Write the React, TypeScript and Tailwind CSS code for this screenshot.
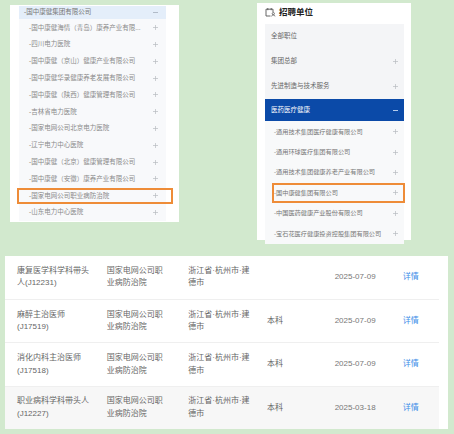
import React from "react";

const font = { fontFamily: '"Liberation Sans", "Noto Sans CJK SC", sans-serif' };

// 左侧：国中康健下属单位
const leftSubs = [
  "-国中康健海情（青岛）康养产业有限...",
  "-四川电力医院",
  "-国中康健（京山）健康产业有限公司",
  "-国中康健华录健康养老发展有限公司",
  "-国中康健（陕西）健康管理有限公司",
  "-吉林省电力医院",
  "-国家电网公司北京电力医院",
  "-辽宁电力中心医院",
  "-国中康健（北京）健康管理有限公司",
  "-国中康健（安徽）康养产业有限公司",
  "-国家电网公司职业病防治院",
  "-山东电力中心医院",
];

const rightTop = [
  { name: "全部职位", plus: false },
  { name: "集团总部", plus: true },
  { name: "先进制造与技术服务", plus: true },
];

const rightSubs = [
  "-通用技术集团医疗健康有限公司",
  "-通用环球医疗集团有限公司",
  "-通用技术集团健康养老产业有限公司",
  "-国中康健集团有限公司",
  "-中国医药健康产业股份有限公司",
  "-宝石花医疗健康投资控股集团有限公司",
];

const jobs = [
  { title: ["康复医学科学科带头", "人(J12231)"], edu: "", date: "2025-07-09" },
  { title: ["麻醉主治医师", "(J17519)"], edu: "本科", date: "2025-07-09" },
  { title: ["消化内科主治医师", "(J17518)"], edu: "本科", date: "2025-07-09" },
  { title: ["职业病科学科带头人", "(J12227)"], edu: "本科", date: "2025-03-18" },
];

function Plus({ color = "#b8bbc0" }: { color?: string }) {
  return (
    <svg width="5" height="5" viewBox="0 0 5 5">
      <path d="M2.5 0V5M0 2.5H5" stroke={color} strokeWidth="0.7" />
    </svg>
  );
}

function Minus({ color = "#b8bbc0" }: { color?: string }) {
  return (
    <svg width="5" height="5" viewBox="0 0 5 5">
      <path d="M0 2.5H5" stroke={color} strokeWidth="0.9" />
    </svg>
  );
}

export default function App() {
  return (
    <div className="w-[454px] h-[434px] bg-[#d2e9ce] overflow-hidden" style={font}>
      <div className="flex items-start h-[256px] pl-[10px]">
        {/* 左侧面板 */}
        <div className="mt-[5px] w-[169px] h-[217px] bg-white pt-[1px] pl-[9px]">
          <div className="w-[147px]">
            <div className="h-[13.4px] bg-[#e4eefa] flex items-center justify-between pl-[5px] pr-[8px]">
              <span className="text-[6.5px] text-[#777] leading-none whitespace-nowrap">-国中康健集团有限公司</span>
              <Minus color="#aab4c2" />
            </div>
            {leftSubs.map((s, i) => (
              <div
                key={s}
                className="relative h-[16.8px] bg-[#f8f9fb] flex items-center justify-between pl-[10px] pr-[8px]"
              >
                <span className="text-[6.5px] text-[#8a8a8a] leading-none whitespace-nowrap">{s}</span>
                <Plus />
                {i === 10 && (
                  <div className="absolute left-[-2px] right-[-7px] top-[0.5px] bottom-0 border-2 border-[#ee8c38]" />
                )}
              </div>
            ))}
          </div>
        </div>

        {/* 右侧面板 */}
        <div className="ml-[78px] mt-[3px] w-[154px] h-[237px] bg-white pl-[8px]">
          <div className="h-[18px] flex items-center gap-[3px]">
            <svg width="11" height="10" viewBox="0 0 11 10" className="mt-[-1px]">
              <path d="M1 2.2H8V5M1 2.2V9H5.5" fill="none" stroke="#555" strokeWidth="0.9" />
              <path d="M2.8 1V3.2M6.2 1V3.2" stroke="#555" strokeWidth="0.9" />
              <circle cx="8.3" cy="6.6" r="1.1" fill="none" stroke="#555" strokeWidth="0.8" />
              <path d="M6.6 9.4C6.8 8.4 7.5 8 8.3 8S9.8 8.4 10 9.4" fill="none" stroke="#555" strokeWidth="0.8" />
            </svg>
            <span className="text-[8.5px] font-bold text-[#222] leading-none">招聘单位</span>
          </div>
          <div className="mt-[3.3px] w-[139px]">
            {rightTop.map((r) => (
              <div key={r.name} className="h-[24.8px] bg-[#f4f5f7] flex items-center justify-between pl-[6px] pr-[6px]">
                <span className="text-[6.5px] text-[#666] leading-none whitespace-nowrap">{r.name}</span>
                {r.plus && <Plus />}
              </div>
            ))}
            <div className="h-[22.8px] bg-[#0b4aa8] flex items-center justify-between pl-[6px] pr-[6px]">
              <span className="text-[6.5px] text-white leading-none whitespace-nowrap">医药医疗健康</span>
              <Minus color="#c9dbf3" />
            </div>
            {rightSubs.map((s, i) => (
              <div key={s} className="relative h-[20.4px] bg-[#f8f9fa] flex items-center justify-between pl-[9px] pr-[6px]">
                <span className="text-[6.2px] text-[#777] leading-none whitespace-nowrap">{s}</span>
                <Plus />
                {i === 3 && (
                  <div className="absolute left-[7px] right-[-1px] top-0 bottom-0 border-2 border-[#ee8c38]" />
                )}
              </div>
            ))}
          </div>
        </div>
      </div>

      {/* 职位列表 */}
      <div className="ml-[5px] w-[443px] h-[173px] bg-white">
        <div className="w-[434px]">
          {jobs.map((j, i) => (
            <div
              key={j.title.join("")}
              className={
                "grid grid-cols-[101.7px_81.6px_78.7px_67.7px_68px_36.3px] items-center text-[8px] leading-[12.5px] text-[#666] " +
                (i === 3 ? "h-[41.5px] bg-[#f7f7f7]" : "h-[43.7px] border-b border-[#efefef]")
              }
            >
              <div className="pl-[12px]">
                <div>{j.title[0]}</div>
                <div>{j.title[1]}</div>
              </div>
              <div>
                <div>国家电网公司职</div>
                <div>业病防治院</div>
              </div>
              <div>
                <div>浙江省·杭州市·建</div>
                <div>德市</div>
              </div>
              <div>{j.edu}</div>
              <div className="text-[#777]">{j.date}</div>
              <div className="text-[#3d8de8]">详情</div>
            </div>
          ))}
        </div>
      </div>
    </div>
  );
}
